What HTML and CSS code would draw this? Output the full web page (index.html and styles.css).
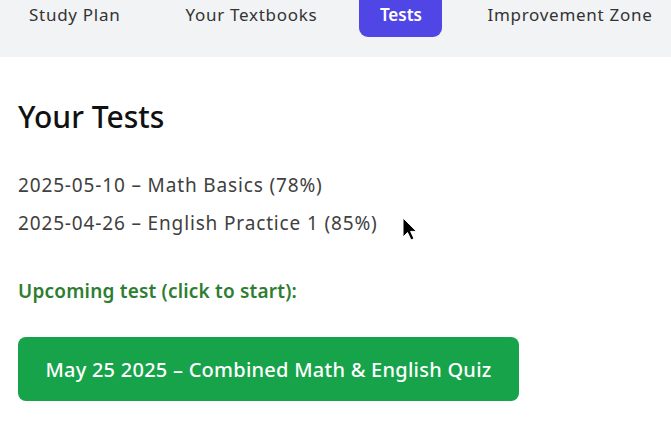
FILE: index.html
```html
<!DOCTYPE html>
<html lang="en">
<head>
<meta charset="utf-8">
<title>Your Tests</title>
<link rel="stylesheet" href="styles.css">
</head>
<body>
<div class="topline"></div>
<nav class="nav">
  <a class="nav-item">Study Plan</a>
  <a class="nav-item">Your Textbooks</a>
  <a class="nav-item active">Tests</a>
  <a class="nav-item">Improvement Zone</a>
</nav>
<main class="content">
  <h1 class="title">Your Tests</h1>
  <ul class="tests">
    <li>2025-05-10 – Math Basics (78%)</li>
    <li>2025-04-26 – English Practice 1 (85%)</li>
  </ul>
  <p class="upcoming">Upcoming test (click to start):</p>
  <button class="start">May 25 2025 – Combined Math &amp; English Quiz</button>
</main>
<svg class="cursor" width="16" height="26" viewBox="0 0 16 26"><path d="M1 1 L1 20 L5.5 15.5 L9 23 L12 21.6 L8.6 14.4 L14.5 14.4 Z" fill="#000" stroke="#fff" stroke-width="1"/></svg>
</body>
</html>
```
FILE: styles.css
```css
* { box-sizing: border-box; }
html, body { margin: 0; padding: 0; background: #fff; }
body {
  font-family: "Noto Sans", "Open Sans", sans-serif;
  color: #333;
  width: 671px;
  height: 423px;
  overflow: hidden;
  position: relative;
}
.topline { height: 2px; background: #555; }
.nav {
  display: flex;
  background: #f1f3f5;
  height: 57px;
  align-items: flex-start;
  margin-top: -2px;
}
.nav-item {
  font-size: 17px;
  color: #333;
  padding: 3px 0 0;
  letter-spacing: 0.72px;
}
.nav-item:nth-child(1) { margin-left: 29px; }
.nav-item:nth-child(2) { margin-left: 65px; }
.nav-item:nth-child(3) { margin-left: 42px; }
.nav-item:nth-child(4) { margin-left: 45px; }
.nav-item.active {
  background: #4f46e5;
  color: #fff;
  font-weight: 600;
  letter-spacing: 0;
  width: 83px;
  height: 37px;
  text-align: center;
  border-radius: 0 0 9px 9px;
}
.content { padding: 0 18px; }
.title {
  font-size: 30px;
  font-weight: 500;
  color: #111;
  margin: 40px 0 0;
  line-height: 40px;
}
.tests { list-style: none; margin: 29px 0 0; padding: 0; }
.tests li {
  font-size: 19px;
  line-height: 38px;
  color: #404040;
  letter-spacing: 0.85px;
}
.upcoming {
  color: #2e7d32;
  font-weight: 600;
  font-size: 19px;
  letter-spacing: 0.2px;
  margin: 36px 0 0;
  line-height: 26px;
}
.start {
  margin-top: 33px;
  width: 501px;
  height: 64px;
  background: #16a34a;
  color: #fff;
  border: none;
  border-radius: 8px;
  font-family: inherit;
  font-size: 20px;
  font-weight: 500;
  letter-spacing: 0.25px;
  padding: 0;
}
.cursor { position: absolute; left: 402px; top: 217px; }
```
